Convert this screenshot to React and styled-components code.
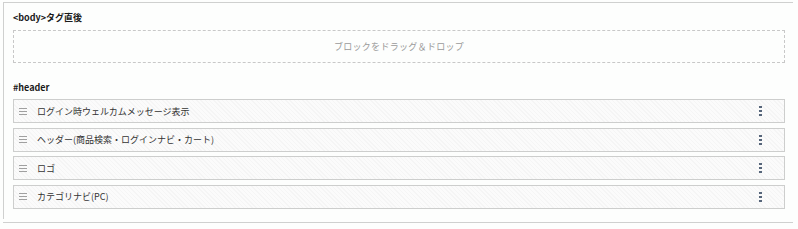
import React from "react";
import styled, { createGlobalStyle } from "styled-components";

const Global = createGlobalStyle`
  html, body { margin: 0; padding: 0; background: #fdfefd; }
  body { font-family: "Noto Sans CJK JP", "Noto Sans", "Liberation Sans", sans-serif; color: #222; }
`;

const Page = styled.div`
  width: 798px;
  height: 229px;
  padding-top: 2px;
  padding-left: 3px;
  box-sizing: border-box;
`;

const Frame = styled.div`
  width: 790px;
  box-sizing: border-box;
  border-top: 1px solid #cfd0cf;
  border-left: 1px solid #cfd0cf;
  padding: 9px 8px 10px 9px;
  display: flex;
  flex-direction: column;
`;

const SectionLabel = styled.div`
  font-size: 9px;
  line-height: 12px;
  font-weight: 700;
  color: #1a1a1a;
  margin-top: ${(p) => p.$mt || 0}px;
  margin-bottom: ${(p) => p.$mb || 0}px;
`;

const DropZone = styled.div`
  height: 33px;
  box-sizing: border-box;
  border: 1px dashed #c8c8c8;
  display: flex;
  align-items: center;
  justify-content: center;
  font-size: 9px;
  color: #9a9a9a;
  letter-spacing: 0.3px;
`;

const List = styled.div`
  display: flex;
  flex-direction: column;
  gap: 4.67px;
`;

const Row = styled.div`
  height: 24px;
  box-sizing: border-box;
  border: 1px solid #cdcecd;
  background: repeating-linear-gradient(45deg, #f5f5f5 0 1px, #fbfbfb 1px 3px);
  display: flex;
  align-items: center;
  padding: 0 22px 0 5px;
`;

const Handle = styled.svg`
  width: 8px;
  height: 7px;
  flex: none;
  margin-right: 10px;
`;

const RowTitle = styled.span`
  flex: 1;
  font-size: 9px;
  color: #333;
  white-space: nowrap;
`;

const Kebab = styled.svg`
  width: 3px;
  height: 10px;
  flex: none;
`;

const BottomLine = styled.div`
  width: 790px;
  height: 1px;
  background: #cfd0cf;
  margin-top: 3px;
`;

const items = [
  "ログイン時ウェルカムメッセージ表示",
  "ヘッダー(商品検索・ログインナビ・カート)",
  "ロゴ",
  "カテゴリナビ(PC)",
];

export default function App() {
  return (
    <>
      <Global />
      <Page>
        <Frame>
          <SectionLabel $mb={6}>&lt;body&gt;タグ直後</SectionLabel>
          <DropZone>ブロックをドラッグ＆ドロップ</DropZone>
          <SectionLabel $mt={19} $mb={5}>#header</SectionLabel>
          <List>
            {items.map((t) => (
              <Row key={t}>
                <Handle viewBox="0 0 8 7">
                  <rect x="0" y="0" width="8" height="1" fill="#a0a0a0" />
                  <rect x="0" y="3" width="8" height="1" fill="#a0a0a0" />
                  <rect x="0" y="6" width="8" height="1" fill="#a0a0a0" />
                </Handle>
                <RowTitle>{t}</RowTitle>
                <Kebab viewBox="0 0 3 10">
                  <rect x="0" y="0" width="3" height="2" fill="#56657a" />
                  <rect x="0" y="4" width="3" height="2" fill="#56657a" />
                  <rect x="0" y="8" width="3" height="2" fill="#56657a" />
                </Kebab>
              </Row>
            ))}
          </List>
        </Frame>
        <BottomLine />
      </Page>
    </>
  );
}
